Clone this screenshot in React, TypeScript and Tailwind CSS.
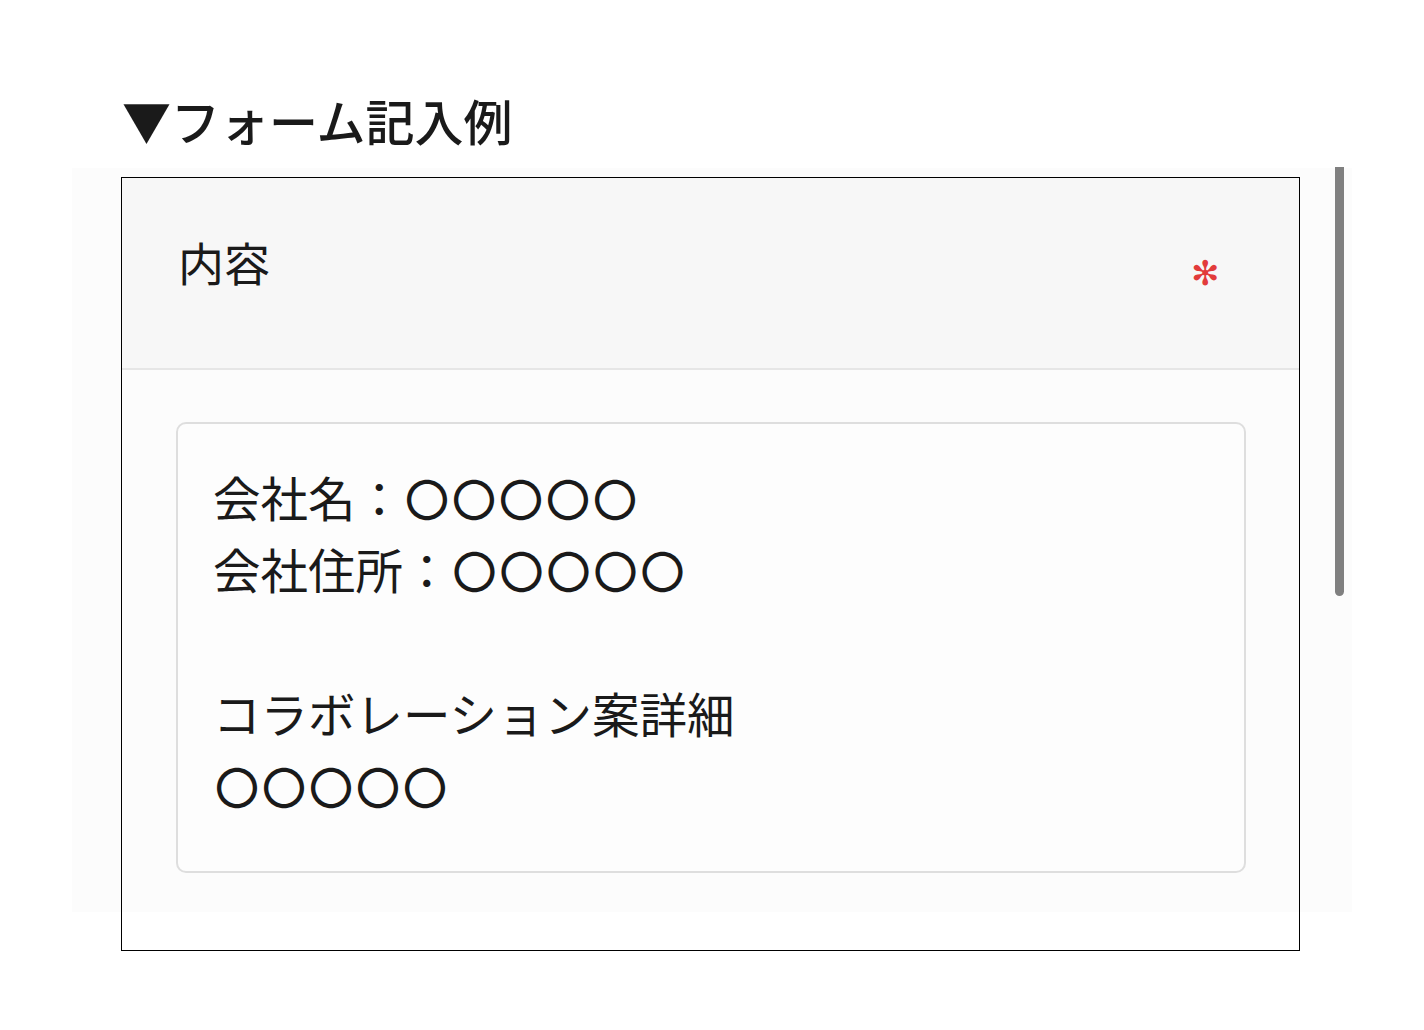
const FONT = "font-['Noto_Sans_CJK_JP','Noto_Sans',sans-serif]";

const lines: [string, string][] = [
  ["会社名：", "〇〇〇〇〇"],
  ["会社住所：", "〇〇〇〇〇"],
  ["", ""],
  ["コラボレーション案詳細", ""],
  ["", "〇〇〇〇〇"],
];

export default function App() {
  return (
    <div className={`relative min-h-[1030px] w-full bg-white ${FONT} text-[#1a1a1a]`}>
      {/* light backdrop of the screenshot and its scrollbar */}
      <div className="absolute left-[72px] top-[168px] h-[744px] w-[1280px] bg-[#fcfcfc]" />
      <div className="absolute left-[1335px] top-[167px] h-[429px] w-[9px] rounded-b-full bg-[#808080]" />

      <div className="relative flex flex-col pl-[121px] pt-[84px]">
        <h2 className="ml-px text-[49px] font-medium leading-[72px]">▼フォーム記入例</h2>

        <div className="mt-[21px] flex h-[774px] w-[1179px] flex-col border border-black bg-white">
          <div className="flex h-[192px] items-start justify-between border-b-2 border-[#e6e6e6] bg-[#f7f7f7] pl-[56px] pr-[80px] pt-[51px]">
            <span className="text-[46px] leading-[64px]">内容</span>
            <span className="mt-[22px] text-[34px] leading-[40px] text-[#e23b3b]">✻</span>
          </div>

          <div className="flex h-[542px] flex-col bg-[#fcfcfc] pl-[54px] pt-[52px]">
            <div className="h-[451px] w-[1070px] rounded-[10px] border-2 border-[#dedede] bg-[#fdfdfd] pl-[35px] pt-[37px]">
              {lines.map(([label, marks], i) => (
                <div key={i} className="h-[72px] whitespace-pre text-[47.5px] leading-[72px]">
                  {label}
                  {marks && (
                    <span className="ml-[2px] text-[44px] font-medium tracking-[3px]">{marks}</span>
                  )}
                </div>
              ))}
            </div>
          </div>
        </div>
      </div>
    </div>
  );
}
